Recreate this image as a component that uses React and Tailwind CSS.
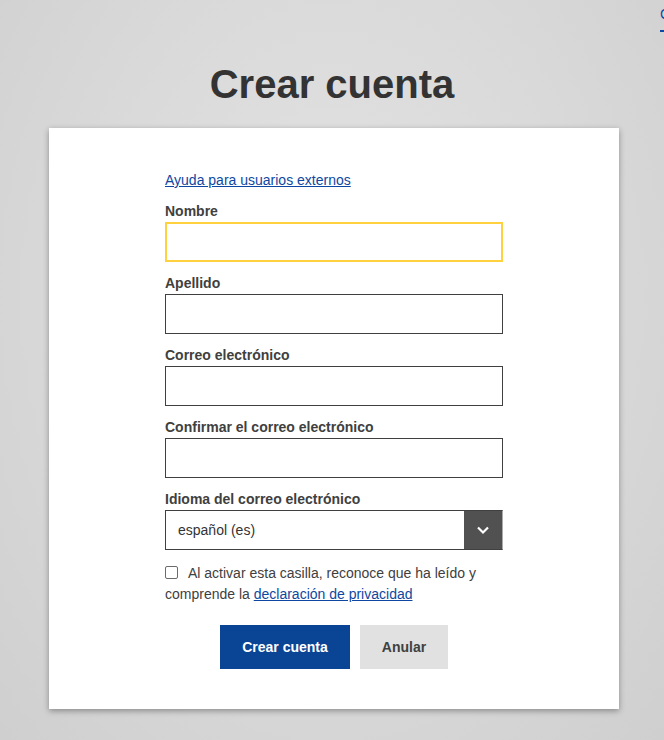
export default function App() {
  const fields = ["Nombre", "Apellido", "Correo electrónico", "Confirmar el correo electrónico"];

  return (
    <div
      className="min-h-[740px] w-[664px] overflow-hidden bg-[radial-gradient(ellipse_at_50%_40%,#e3e3e3_0%,#d9d9d9_55%,#cfcfcf_100%)] text-[#404040]"
      style={{ fontFamily: '"Liberation Sans", Arial, sans-serif' }}
    >
      <div className="h-[40px] pl-[660px] pt-[2px] whitespace-nowrap">
        <a href="#" className="border-b-2 border-[#0e47a1] pb-[8px] text-[14px] text-[#0e47a1]">
          Català
        </a>
      </div>

      <h1 className="mt-[21px] text-center text-[40px] font-bold leading-[46px] text-[#333333]">Crear cuenta</h1>

      <div className="ml-[49px] mr-[45px] mt-[21px] bg-white px-[116px] pb-[40px] pt-[43px] shadow-[0_2px_6px_rgba(0,0,0,0.35)]">
        <a href="#" className="block text-[14px] leading-[18px] text-[#0e47a1] underline">
          Ayuda para usuarios externos
        </a>

        <div className="mt-[12px] flex flex-col gap-[11px]">
          {fields.map((label, i) => (
            <div key={label} className="flex flex-col">
              <label className="text-[14px] font-bold leading-[20px] text-[#404040]">{label}</label>
              <input
                type="text"
                className={
                  i === 0
                    ? "mt-[1px] h-[40px] w-full border-2 border-[#ffd13f] bg-white outline-none"
                    : "mt-[1px] h-[40px] w-full border border-[#404040] bg-white outline-none"
                }
              />
            </div>
          ))}

          <div className="flex flex-col">
            <label className="text-[14px] font-bold leading-[20px] text-[#404040]">Idioma del correo electrónico</label>
            <div className="mt-[1px] flex h-[40px] w-full border border-[#404040] border-r-[#aaaaaa]">
              <div className="flex flex-1 items-center pl-[12px] text-[14px] text-[#333333]">español (es)</div>
              <div className="flex w-[38px] items-center justify-center bg-[#515151]">
                <svg width="14" height="10" viewBox="0 0 14 10" fill="none">
                  <path d="M2 2.5 L7 7.5 L12 2.5" stroke="white" strokeWidth="2.2" />
                </svg>
              </div>
            </div>
          </div>
        </div>

        <div className="mt-[13px] text-[14px] leading-[21px] text-[#404040]">
          <span className="mr-[10px] inline-block h-[13px] w-[13px] rounded-[2px] border border-[#6b6b6b] align-[-1px]"></span>
          Al activar esta casilla, reconoce que ha leído y comprende la{" "}
          <a href="#" className="text-[#0e47a1] underline">
            declaración de privacidad
          </a>
        </div>

        <div className="mt-[20px] flex justify-center gap-[10px]">
          <button className="h-[44px] w-[130px] bg-[#0a4595] text-[14px] font-bold text-white">Crear cuenta</button>
          <button className="h-[44px] w-[88px] bg-[#e1e1e1] text-[14px] font-bold text-[#404040]">Anular</button>
        </div>
      </div>
    </div>
  );
}
